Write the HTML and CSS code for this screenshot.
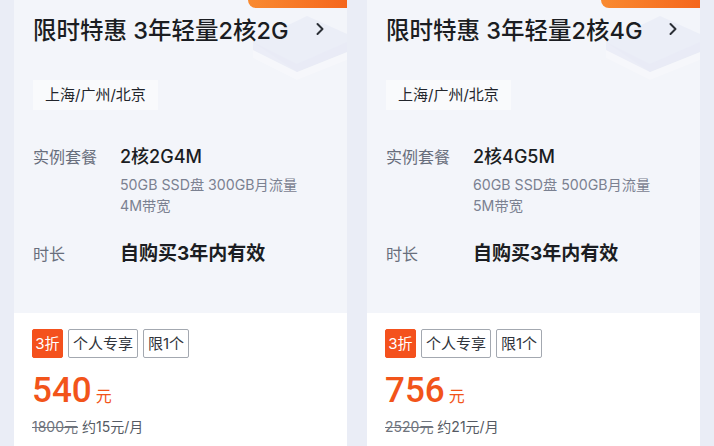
FILE: index.html
```html
<!DOCTYPE html>
<html lang="zh-CN">
<head>
  <meta charset="UTF-8" />
  <meta name="viewport" content="width=device-width, initial-scale=1.0"/>
  <title>轻量应用服务器 - 限时特惠</title>
  <link rel="stylesheet" href="styles.css">
</head>
<body>
  <div class="cards">

    <!-- Carte 2核2G -->
    <div class="card">
      <div class="card-top">
        <div class="ribbon"></div>
        <svg class="deco" width="100" height="80" viewBox="0 0 100 80">
          <polygon points="6,34 60,8 100,26 100,44 50,64" fill="#e9ecf7"/>
          <polygon points="6,42 50,64 100,44 100,52 50,72 6,50" fill="#f7f8fc"/>
          <polygon points="6,34 50,56 100,34 100,44 50,64 6,42" fill="#e4e7f4" opacity="0.7"/>
        </svg>
        <div class="title">
          <span>限时特惠 3年轻量2核2G</span>
          <svg class="chevron" width="10" height="14" viewBox="0 0 10 14">
            <path d="M2.5 2 L7.5 7 L2.5 12" fill="none" stroke="#2b2f36" stroke-width="2" stroke-linecap="round" stroke-linejoin="round"/>
          </svg>
        </div>
        <div class="region">上海/广州/北京</div>
        <div class="row">
          <div class="label">实例套餐</div>
          <div class="value">
            <div class="main">2核2G4M</div>
            <div class="sub">50GB SSD盘 300GB月流量</div>
            <div class="sub">4M带宽</div>
          </div>
        </div>
        <div class="row duration">
          <div class="label">时长</div>
          <div class="value"><div class="main strong">自购买3年内有效</div></div>
        </div>
      </div>
      <div class="card-bottom">
        <div class="tags">
          <span class="tag discount">3折</span>
          <span class="tag">个人专享</span>
          <span class="tag">限1个</span>
        </div>
        <div class="price"><span class="num">540</span><span class="unit">元</span></div>
        <div class="old-price"><s>1800元</s> 约15元/月</div>
      </div>
    </div>

    <!-- Carte 2核4G -->
    <div class="card">
      <div class="card-top">
        <div class="ribbon"></div>
        <svg class="deco" width="100" height="80" viewBox="0 0 100 80">
          <polygon points="6,34 60,8 100,26 100,44 50,64" fill="#e9ecf7"/>
          <polygon points="6,42 50,64 100,44 100,52 50,72 6,50" fill="#f7f8fc"/>
          <polygon points="6,34 50,56 100,34 100,44 50,64 6,42" fill="#e4e7f4" opacity="0.7"/>
        </svg>
        <div class="title">
          <span>限时特惠 3年轻量2核4G</span>
          <svg class="chevron" width="10" height="14" viewBox="0 0 10 14">
            <path d="M2.5 2 L7.5 7 L2.5 12" fill="none" stroke="#2b2f36" stroke-width="2" stroke-linecap="round" stroke-linejoin="round"/>
          </svg>
        </div>
        <div class="region">上海/广州/北京</div>
        <div class="row">
          <div class="label">实例套餐</div>
          <div class="value">
            <div class="main">2核4G5M</div>
            <div class="sub">60GB SSD盘 500GB月流量</div>
            <div class="sub">5M带宽</div>
          </div>
        </div>
        <div class="row duration">
          <div class="label">时长</div>
          <div class="value"><div class="main strong">自购买3年内有效</div></div>
        </div>
      </div>
      <div class="card-bottom">
        <div class="tags">
          <span class="tag discount">3折</span>
          <span class="tag">个人专享</span>
          <span class="tag">限1个</span>
        </div>
        <div class="price"><span class="num">756</span><span class="unit">元</span></div>
        <div class="old-price"><s>2520元</s> 约21元/月</div>
      </div>
    </div>

  </div>
</body>
</html>
```

FILE: styles.css
```css
body {
  font-family: Inter, "Noto Sans CJK SC", sans-serif;
  background-color: #eaedf6;
  margin: 0;
  padding: 0;
  overflow: hidden;
}

.cards {
  display: flex;
  gap: 20px;
  padding-left: 14px;
}

.card {
  width: 333px;
  height: 446px;
  background: #ffffff;
  display: flex;
  flex-direction: column;
}

/* Partie haute */
.card-top {
  position: relative;
  background: #f3f5fa;
  padding: 14px 20px 46px 19px;
  overflow: hidden;
}

.ribbon {
  position: absolute;
  top: 0;
  right: 0;
  width: 99px;
  height: 8px;
  background: linear-gradient(90deg, #f98a30, #f5661c);
  border-bottom-left-radius: 8px;
}

.deco {
  position: absolute;
  top: 8px;
  right: 0;
  opacity: 0.75;
}

.title {
  position: relative;
  display: flex;
  justify-content: space-between;
  align-items: center;
  height: 30px;
  font-size: 23.5px;
  font-weight: 500;
  color: #1b1d22;
}

.chevron {
  margin-right: 2px;
}

.region {
  position: relative;
  display: inline-block;
  margin-top: 36px;
  height: 30px;
  line-height: 30px;
  padding: 0 12px;
  background: #f9fafc;
  font-size: 15px;
  color: #23262c;
}

.row {
  display: flex;
  margin-top: 34px;
}

.row.duration {
  margin-top: 25px;
}

.label {
  width: 87px;
  flex-shrink: 0;
  font-size: 16px;
  line-height: 26px;
  color: #686e7c;
}

.main {
  font-size: 18px;
  line-height: 26px;
  font-weight: 500;
  color: #1b1d22;
}

.main.strong {
  font-size: 19px;
  font-weight: 700;
}

.sub {
  font-size: 14.2px;
  line-height: 21px;
  color: #7b8191;
}

.value .main + .sub {
  margin-top: 4px;
}

/* Partie basse */
.card-bottom {
  padding: 16px 19px 0 18px;
}

.tags {
  display: flex;
  gap: 5px;
}

.tag {
  height: 29px;
  line-height: 27px;
  padding: 0 4px;
  border: 1px solid #a3a8b0;
  border-radius: 2px;
  font-size: 15px;
  color: #30343b;
  box-sizing: border-box;
}

.tag.discount {
  width: 31px;
  padding: 0;
  text-align: center;
  background: #f4511d;
  border-color: #f4511d;
  color: #ffffff;
}

.price {
  margin-top: 13px;
  height: 40px;
  display: flex;
  align-items: baseline;
  color: #f2541a;
}

.price .num {
  font-family: Roboto, "Liberation Sans", sans-serif;
  font-weight: 500;
  font-size: 35px;
  line-height: 40px;
}

.price .unit {
  font-size: 16px;
  margin-left: 4px;
}

.old-price {
  margin-top: 6px;
  font-size: 14px;
  line-height: 20px;
  color: #555a63;
}

.old-price s {
  color: #6f747d;
}
```
